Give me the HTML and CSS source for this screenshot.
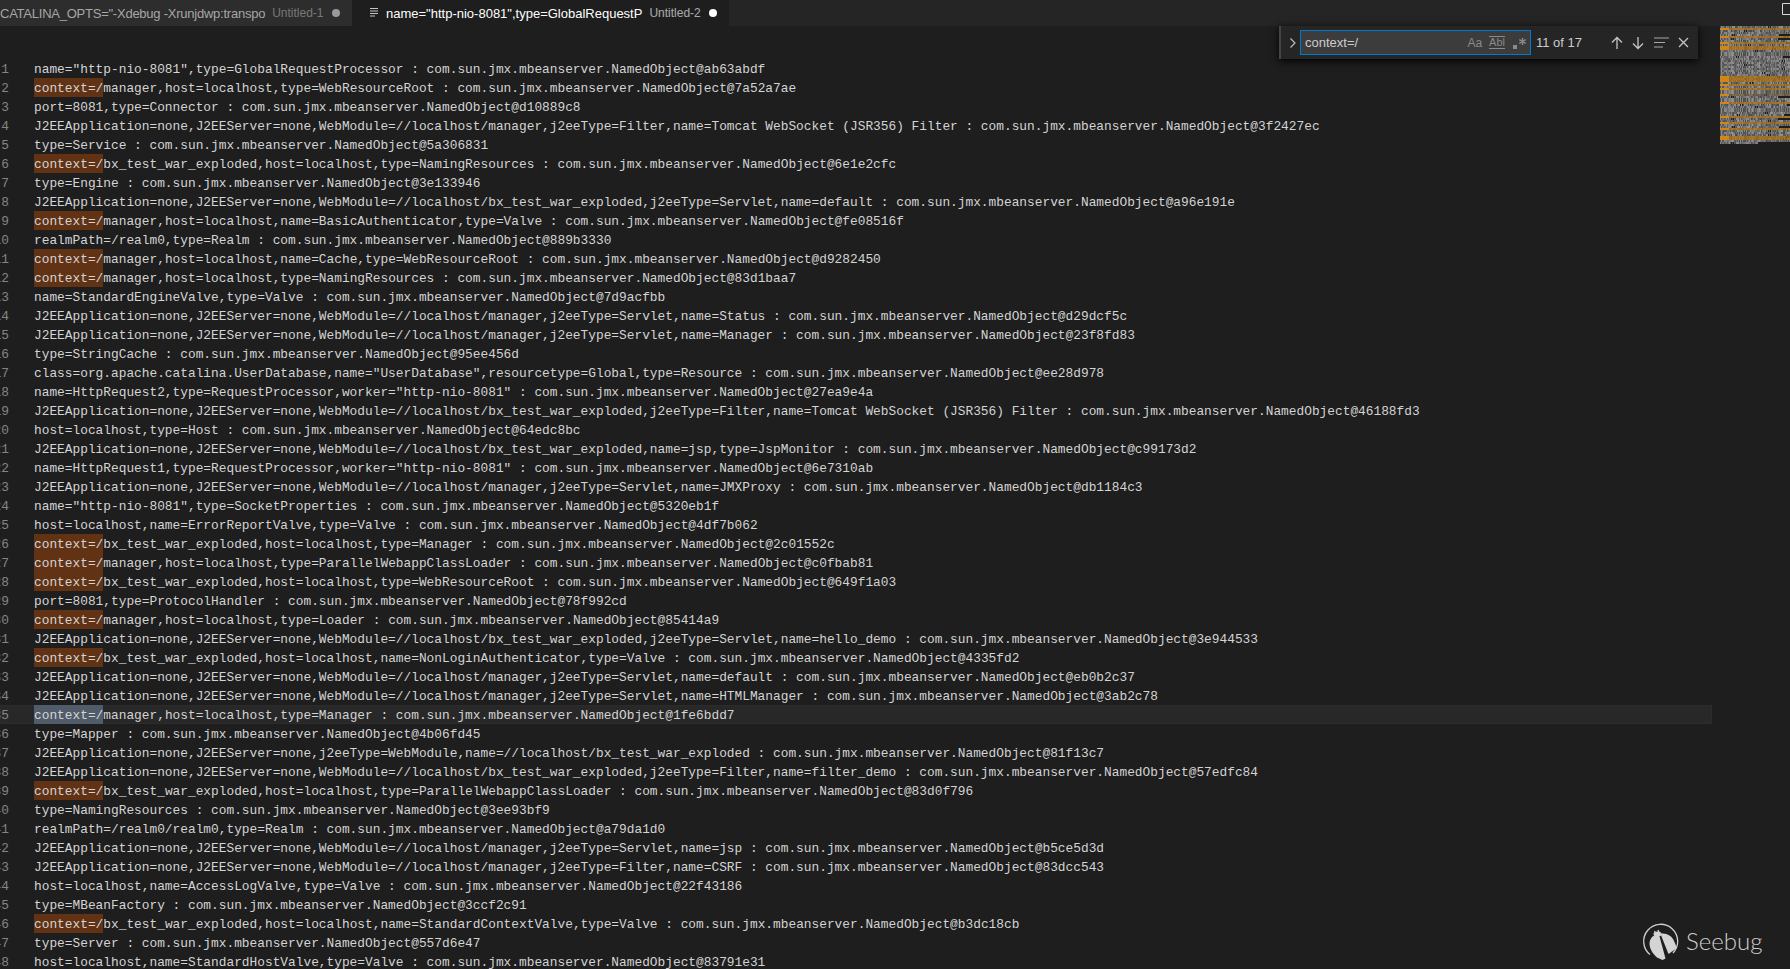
FILE: index.html
```html
<!DOCTYPE html>
<html lang="en">
<head>
<meta charset="utf-8">
<title>Untitled-2</title>
<link rel="stylesheet" href="styles.css">
</head>
<body>
<div class="window">
  <div class="tabs">
    <div class="tab tab-first">
      <span class="tab-name">CATALINA_OPTS="-Xdebug -Xrunjdwp:transpo</span>
      <span class="tab-desc">Untitled-1</span>
      <span class="dot"></span>
    </div>
    <div class="tab tab-active">
      <svg class="file-icon" width="9" height="10" viewBox="0 0 9 10"><path d="M0 .5h8M0 3h8M0 5.500h8M0 8h5" stroke="#c5c5c5" fill="none"/></svg>
      <span class="tab-name">name="http-nio-8081",type=GlobalRequestP</span>
      <span class="tab-desc">Untitled-2</span>
      <span class="dot dot-active"></span>
    </div>
    <svg class="split" width="9" height="12" viewBox="0 0 9 12"><path d="M.5.5h12v11H.5z" stroke="#d8d8d8" fill="none"/></svg>
  </div>
  <div class="editor">
    <div class="code" id="code">
      <div class="row"><span class="ln">1</span><span class="tx">name="http-nio-8081",type=GlobalRequestProcessor : com.sun.jmx.mbeanserver.NamedObject@ab63abdf</span></div>
      <div class="row"><span class="ln">2</span><span class="tx"><span class="m">context=/</span>manager,host=localhost,type=WebResourceRoot : com.sun.jmx.mbeanserver.NamedObject@7a52a7ae</span></div>
      <div class="row"><span class="ln">3</span><span class="tx">port=8081,type=Connector : com.sun.jmx.mbeanserver.NamedObject@d10889c8</span></div>
      <div class="row"><span class="ln">4</span><span class="tx">J2EEApplication=none,J2EEServer=none,WebModule=//localhost/manager,j2eeType=Filter,name=Tomcat WebSocket (JSR356) Filter : com.sun.jmx.mbeanserver.NamedObject@3f2427ec</span></div>
      <div class="row"><span class="ln">5</span><span class="tx">type=Service : com.sun.jmx.mbeanserver.NamedObject@5a306831</span></div>
      <div class="row"><span class="ln">6</span><span class="tx"><span class="m">context=/</span>bx_test_war_exploded,host=localhost,type=NamingResources : com.sun.jmx.mbeanserver.NamedObject@6e1e2cfc</span></div>
      <div class="row"><span class="ln">7</span><span class="tx">type=Engine : com.sun.jmx.mbeanserver.NamedObject@3e133946</span></div>
      <div class="row"><span class="ln">8</span><span class="tx">J2EEApplication=none,J2EEServer=none,WebModule=//localhost/bx_test_war_exploded,j2eeType=Servlet,name=default : com.sun.jmx.mbeanserver.NamedObject@a96e191e</span></div>
      <div class="row"><span class="ln">9</span><span class="tx"><span class="m">context=/</span>manager,host=localhost,name=BasicAuthenticator,type=Valve : com.sun.jmx.mbeanserver.NamedObject@fe08516f</span></div>
      <div class="row"><span class="ln">10</span><span class="tx">realmPath=/realm0,type=Realm : com.sun.jmx.mbeanserver.NamedObject@889b3330</span></div>
      <div class="row"><span class="ln">11</span><span class="tx"><span class="m">context=/</span>manager,host=localhost,name=Cache,type=WebResourceRoot : com.sun.jmx.mbeanserver.NamedObject@d9282450</span></div>
      <div class="row"><span class="ln">12</span><span class="tx"><span class="m">context=/</span>manager,host=localhost,type=NamingResources : com.sun.jmx.mbeanserver.NamedObject@83d1baa7</span></div>
      <div class="row"><span class="ln">13</span><span class="tx">name=StandardEngineValve,type=Valve : com.sun.jmx.mbeanserver.NamedObject@7d9acfbb</span></div>
      <div class="row"><span class="ln">14</span><span class="tx">J2EEApplication=none,J2EEServer=none,WebModule=//localhost/manager,j2eeType=Servlet,name=Status : com.sun.jmx.mbeanserver.NamedObject@d29dcf5c</span></div>
      <div class="row"><span class="ln">15</span><span class="tx">J2EEApplication=none,J2EEServer=none,WebModule=//localhost/manager,j2eeType=Servlet,name=Manager : com.sun.jmx.mbeanserver.NamedObject@23f8fd83</span></div>
      <div class="row"><span class="ln">16</span><span class="tx">type=StringCache : com.sun.jmx.mbeanserver.NamedObject@95ee456d</span></div>
      <div class="row"><span class="ln">17</span><span class="tx">class=org.apache.catalina.UserDatabase,name="UserDatabase",resourcetype=Global,type=Resource : com.sun.jmx.mbeanserver.NamedObject@ee28d978</span></div>
      <div class="row"><span class="ln">18</span><span class="tx">name=HttpRequest2,type=RequestProcessor,worker="http-nio-8081" : com.sun.jmx.mbeanserver.NamedObject@27ea9e4a</span></div>
      <div class="row"><span class="ln">19</span><span class="tx">J2EEApplication=none,J2EEServer=none,WebModule=//localhost/bx_test_war_exploded,j2eeType=Filter,name=Tomcat WebSocket (JSR356) Filter : com.sun.jmx.mbeanserver.NamedObject@46188fd3</span></div>
      <div class="row"><span class="ln">20</span><span class="tx">host=localhost,type=Host : com.sun.jmx.mbeanserver.NamedObject@64edc8bc</span></div>
      <div class="row"><span class="ln">21</span><span class="tx">J2EEApplication=none,J2EEServer=none,WebModule=//localhost/bx_test_war_exploded,name=jsp,type=JspMonitor : com.sun.jmx.mbeanserver.NamedObject@c99173d2</span></div>
      <div class="row"><span class="ln">22</span><span class="tx">name=HttpRequest1,type=RequestProcessor,worker="http-nio-8081" : com.sun.jmx.mbeanserver.NamedObject@6e7310ab</span></div>
      <div class="row"><span class="ln">23</span><span class="tx">J2EEApplication=none,J2EEServer=none,WebModule=//localhost/manager,j2eeType=Servlet,name=JMXProxy : com.sun.jmx.mbeanserver.NamedObject@db1184c3</span></div>
      <div class="row"><span class="ln">24</span><span class="tx">name="http-nio-8081",type=SocketProperties : com.sun.jmx.mbeanserver.NamedObject@5320eb1f</span></div>
      <div class="row"><span class="ln">25</span><span class="tx">host=localhost,name=ErrorReportValve,type=Valve : com.sun.jmx.mbeanserver.NamedObject@4df7b062</span></div>
      <div class="row"><span class="ln">26</span><span class="tx"><span class="m">context=/</span>bx_test_war_exploded,host=localhost,type=Manager : com.sun.jmx.mbeanserver.NamedObject@2c01552c</span></div>
      <div class="row"><span class="ln">27</span><span class="tx"><span class="m">context=/</span>manager,host=localhost,type=ParallelWebappClassLoader : com.sun.jmx.mbeanserver.NamedObject@c0fbab81</span></div>
      <div class="row"><span class="ln">28</span><span class="tx"><span class="m">context=/</span>bx_test_war_exploded,host=localhost,type=WebResourceRoot : com.sun.jmx.mbeanserver.NamedObject@649f1a03</span></div>
      <div class="row"><span class="ln">29</span><span class="tx">port=8081,type=ProtocolHandler : com.sun.jmx.mbeanserver.NamedObject@78f992cd</span></div>
      <div class="row"><span class="ln">30</span><span class="tx"><span class="m">context=/</span>manager,host=localhost,type=Loader : com.sun.jmx.mbeanserver.NamedObject@85414a9</span></div>
      <div class="row"><span class="ln">31</span><span class="tx">J2EEApplication=none,J2EEServer=none,WebModule=//localhost/bx_test_war_exploded,j2eeType=Servlet,name=hello_demo : com.sun.jmx.mbeanserver.NamedObject@3e944533</span></div>
      <div class="row"><span class="ln">32</span><span class="tx"><span class="m">context=/</span>bx_test_war_exploded,host=localhost,name=NonLoginAuthenticator,type=Valve : com.sun.jmx.mbeanserver.NamedObject@4335fd2</span></div>
      <div class="row"><span class="ln">33</span><span class="tx">J2EEApplication=none,J2EEServer=none,WebModule=//localhost/manager,j2eeType=Servlet,name=default : com.sun.jmx.mbeanserver.NamedObject@eb0b2c37</span></div>
      <div class="row"><span class="ln">34</span><span class="tx">J2EEApplication=none,J2EEServer=none,WebModule=//localhost/manager,j2eeType=Servlet,name=HTMLManager : com.sun.jmx.mbeanserver.NamedObject@3ab2c78</span></div>
      <div class="row row-active"><span class="ln">35</span><span class="tx"><span class="m m-active">context=/</span>manager,host=localhost,type=Manager : com.sun.jmx.mbeanserver.NamedObject@1fe6bdd7</span></div>
      <div class="row"><span class="ln">36</span><span class="tx">type=Mapper : com.sun.jmx.mbeanserver.NamedObject@4b06fd45</span></div>
      <div class="row"><span class="ln">37</span><span class="tx">J2EEApplication=none,J2EEServer=none,j2eeType=WebModule,name=//localhost/bx_test_war_exploded : com.sun.jmx.mbeanserver.NamedObject@81f13c7</span></div>
      <div class="row"><span class="ln">38</span><span class="tx">J2EEApplication=none,J2EEServer=none,WebModule=//localhost/bx_test_war_exploded,j2eeType=Filter,name=filter_demo : com.sun.jmx.mbeanserver.NamedObject@57edfc84</span></div>
      <div class="row"><span class="ln">39</span><span class="tx"><span class="m">context=/</span>bx_test_war_exploded,host=localhost,type=ParallelWebappClassLoader : com.sun.jmx.mbeanserver.NamedObject@83d0f796</span></div>
      <div class="row"><span class="ln">40</span><span class="tx">type=NamingResources : com.sun.jmx.mbeanserver.NamedObject@3ee93bf9</span></div>
      <div class="row"><span class="ln">41</span><span class="tx">realmPath=/realm0/realm0,type=Realm : com.sun.jmx.mbeanserver.NamedObject@a79da1d0</span></div>
      <div class="row"><span class="ln">42</span><span class="tx">J2EEApplication=none,J2EEServer=none,WebModule=//localhost/manager,j2eeType=Servlet,name=jsp : com.sun.jmx.mbeanserver.NamedObject@b5ce5d3d</span></div>
      <div class="row"><span class="ln">43</span><span class="tx">J2EEApplication=none,J2EEServer=none,WebModule=//localhost/manager,j2eeType=Filter,name=CSRF : com.sun.jmx.mbeanserver.NamedObject@83dcc543</span></div>
      <div class="row"><span class="ln">44</span><span class="tx">host=localhost,name=AccessLogValve,type=Valve : com.sun.jmx.mbeanserver.NamedObject@22f43186</span></div>
      <div class="row"><span class="ln">45</span><span class="tx">type=MBeanFactory : com.sun.jmx.mbeanserver.NamedObject@3ccf2c91</span></div>
      <div class="row"><span class="ln">46</span><span class="tx"><span class="m">context=/</span>bx_test_war_exploded,host=localhost,name=StandardContextValve,type=Valve : com.sun.jmx.mbeanserver.NamedObject@b3dc18cb</span></div>
      <div class="row"><span class="ln">47</span><span class="tx">type=Server : com.sun.jmx.mbeanserver.NamedObject@557d6e47</span></div>
      <div class="row"><span class="ln">48</span><span class="tx">host=localhost,name=StandardHostValve,type=Valve : com.sun.jmx.mbeanserver.NamedObject@83791e31</span></div>
    </div>
    <canvas class="minimap" id="minimap" width="70" height="118"></canvas>
  </div>

  <div class="find">
    <svg class="chev" width="8" height="12" viewBox="0 0 8 12"><path d="M1.500 1.500 6 6l-4.500 4.500" stroke="#c5c5c5" stroke-width="1.100" fill="none"/></svg>
    <div class="find-input">
      <span class="find-text">context=/</span>
      <span class="opt opt-aa">Aa</span>
      <span class="opt opt-ab">Abl</span>
      <svg class="opt-re" width="14" height="12" viewBox="0 0 14 12"><rect x="0" y="8" width="4" height="4" fill="#8a8a8a"/><path d="M9.500 1v7M6.300 2.700l6.400 3.600M12.700 2.700 6.300 6.300" stroke="#8a8a8a" stroke-width="1.400" fill="none"/></svg>
    </div>
    <span class="count">11 of 17</span>
    <div class="find-actions">
      <svg width="12" height="14" viewBox="0 0 12 14"><path d="M6 13V1.500M1 6.500l5-5 5 5" stroke="#c5c5c5" stroke-width="1.300" fill="none"/></svg>
      <svg width="12" height="14" viewBox="0 0 12 14"><path d="M6 1v11.500M1 7.500l5 5 5-5" stroke="#c5c5c5" stroke-width="1.300" fill="none"/></svg>
      <svg width="15" height="11" viewBox="0 0 15 11"><path d="M0 1h15M0 5.500h11M0 10h9" stroke="#a8a8a8" fill="none"/></svg>
      <svg width="11" height="11" viewBox="0 0 11 11"><path d="M1 1l9 9M10 1l-9 9" stroke="#c5c5c5" stroke-width="1.300" fill="none"/></svg>
    </div>
  </div>

  <div class="logo">
    <svg width="38" height="40" viewBox="0 0 38 40">
      <path d="M8 33.500A17 17 0 1 1 31 32" stroke="#cfcfcf" stroke-width="1.300" fill="none"/>
      <path d="M17 13.500c-5-.5-9.500 3.500-9.500 9 0 5 3 10 7.500 14l5.500 2.500 3-1.500z" fill="#d4d4d4"/>
      <path d="M18.500 13c5-1.500 11 1.500 13.500 7l3 7-8.500 6z" fill="#d4d4d4"/>
      <path d="M14 13l-1.500-3M17 11.500 16 9" stroke="#d4d4d4" stroke-width="1.300"/>
      <ellipse cx="15.500" cy="13" rx="4" ry="2.500" fill="#d4d4d4"/>
    </svg>
    <span class="logo-text">Seebug</span>
  </div>
</div>
<script src="minimap.js"></script>
</body>
</html>
```
FILE: styles.css
```css
* { box-sizing: border-box; }
html, body { margin: 0; height: 100%; overflow: hidden; background: #1e1e1e; }
.window { position: relative; width: 1790px; height: 969px; overflow: hidden; display: flex; flex-direction: column; }

.tabs { flex: none; height: 26px; background: #252526; display: flex; position: relative; font-family: "Liberation Sans", Arial, sans-serif; font-size: 13px; }
.tab { height: 26px; display: flex; align-items: center; white-space: nowrap; overflow: hidden; }
.tab-first { width: 352px; background: #2d2d2d; color: #a6a6a6; }
.tab-first .tab-name { letter-spacing: -0.24px; }
.tab-active { width: 377px; background: #1e1e1e; color: #fff; padding-left: 18px; }
.tab-desc { margin-left: 7px; font-size: 12px; opacity: .62; }
.file-icon { margin-right: 7px; flex: none; }
.dot { width: 8px; height: 8px; border-radius: 50%; background: #9a9a9a; margin-left: 8px; flex: none; }
.dot-active { background: #fff; margin-left: 8px; }
.split { position: absolute; left: 1782px; top: 3px; }

.editor { flex: 1; display: flex; min-height: 0; }
.code { flex: 1; min-width: 0; padding: 33px 8px 0 0; overflow: hidden; font-family: "Liberation Mono", "Courier New", monospace; font-size: 12.833px; color: #d4d4d4; }
.row { display: flex; height: 19px; line-height: 21px; white-space: pre; }
.row-active { background: #282828; box-shadow: inset 0 0 0 1px #2c2c2c; }
.ln { width: 9px; height: 19px; flex: none; display: flex; justify-content: flex-end; overflow: hidden; color: #858585; margin-right: 25px; }
.m { background: #613214; display: inline-block; height: 19px; vertical-align: top; }
.m-active { background: #515c6a; }
.minimap { flex: none; width: 70px; height: 118px; display: block; }

.find { position: absolute; left: 1279px; top: 26px; width: 419px; height: 33px; background: #252526; border-left: 2px solid #454545; box-shadow: 0 2px 8px #000; display: flex; align-items: center; font-family: "Liberation Sans", Arial, sans-serif; font-size: 13px; color: #cccccc; }
.chev { margin-left: 8px; flex: none; }
.find-input { margin-left: 3px; width: 231px; height: 25px; background: #3c3c3c; border: 1px solid #007acc; display: flex; align-items: center; padding-left: 4px; flex: none; }
.find-text { flex: 1; }
.opt { color: #8a8a8a; font-size: 12px; }
.opt-aa { margin-right: 7px; }
.opt-ab { margin-right: 8px; font-size: 11px; border-top: 1px solid #8a8a8a; border-bottom: 1px solid #8a8a8a; line-height: 11px; }
.opt-re { margin-right: 3px; flex: none; }
.count { margin-left: 5px; white-space: nowrap; }
.find-actions { margin-left: 28.500px; display: flex; align-items: center; gap: 9.500px; }

.logo { position: absolute; left: 1642px; top: 921px; display: flex; align-items: center; gap: 6px; color: #cfcfcf; }
.logo-text { font-family: Lato, "Open Sans", sans-serif; font-weight: 300; font-size: 24px; line-height: 34px; }
```
FILE: minimap.js
```js
(function () {
  var canvas = document.getElementById('minimap');
  var ctx = canvas.getContext('2d');
  var rows = Array.prototype.slice.call(document.querySelectorAll('#code .tx'));
  var lines = rows.map(function (r) { return r.textContent; });
  var extra = [1, 41, 4, 5, 47, 7, 0, 8, 10, 42, 6];
  extra.forEach(function (i) { lines.push(lines[i]); });
  var matches = {};
  lines.forEach(function (l, i) { if (l.indexOf('context=/') === 0) matches[i] = 1; });
  var active = 34;

  lines.forEach(function (line, y) {
    var top = y * 2;
    var isMatch = matches[y];
    var isActive = y === active;
    var width = y === lines.length - 1 ? 38 : 70;
    if (isMatch) {
      ctx.fillStyle = '#7d5a22';
      ctx.fillRect(0, top, Math.min(line.length, width), 2);
      ctx.fillStyle = '#d18616';
      ctx.fillRect(0, top, 9, 2);
    }
    if (isActive) {
      ctx.fillStyle = '#2f4257';
      ctx.fillRect(0, top, width, 2);
      ctx.fillStyle = '#d18616';
      ctx.fillRect(0, top, 9, 2);
    }
    for (var x = 0; x < width && x < line.length; x++) {
      if (line[x] === ' ') continue;
      if (isMatch && x < 9) continue;
      if (isActive && x < 9) continue;
      var code = line.charCodeAt(x);
      var shade = 0.25 + ((code * 7 + x) % 11) / 26;
      if (isMatch) {
        ctx.fillStyle = 'rgba(200,140,50,' + shade + ')';
      } else if (isActive) {
        ctx.fillStyle = 'rgba(110,125,145,' + shade + ')';
      } else {
        ctx.fillStyle = 'rgba(212,212,212,' + shade + ')';
      }
      ctx.fillRect(x, top, 1, 2);
    }
  });
})();
```
